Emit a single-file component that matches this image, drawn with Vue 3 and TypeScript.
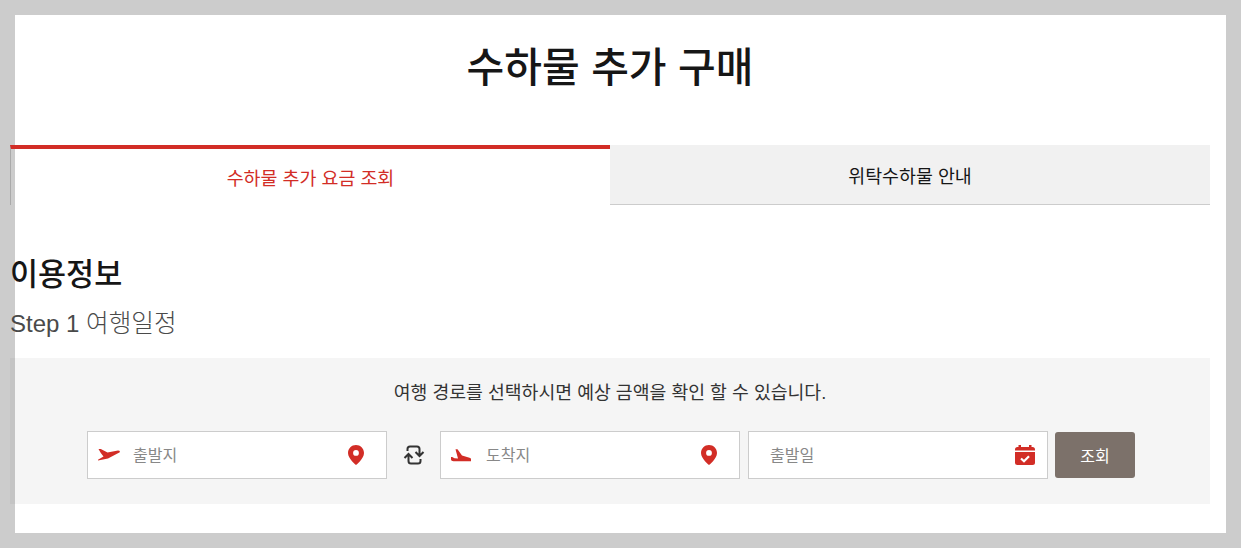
<template>
  <div class="page">
    <h1 class="title">수하물 추가 구매</h1>
    <div class="content">
      <div class="tabs">
        <button class="tab active">수하물 추가 요금 조회</button>
        <button class="tab">위탁수하물 안내</button>
      </div>
      <h2 class="section">이용정보</h2>
      <h3 class="step">Step 1 <span class="step-name">여행일정</span></h3>
      <div class="panel">
        <p class="notice">여행 경로를 선택하시면 예상 금액을 확인 할 수 있습니다.</p>
        <div class="search">
          <div class="field">
            <svg class="plane" width="24" height="14" viewBox="0 0 24 14">
              <path d="M1.500 1H3.800L10.500 4.500 21 2.500Q22.800 2.500 22.800 3.300V4.300L11 10.500 1 12.500V11.800L6.500 8.500 3.800 5Z" fill="#d22d26" />
            </svg>
            <span class="placeholder">출발지</span>
            <svg class="pin" width="24" height="24" viewBox="0 0 24 24">
              <path d="M12 2C7.6 2 4 5.5 4 9.900 4 15.500 12 22 12 22s8-6.500 8-12.100C20 5.500 16.400 2 12 2zm0 10.800a2.900 2.900 0 1 1 0-5.800 2.900 2.900 0 0 1 0 5.800z" fill="#d22d26" />
            </svg>
          </div>
          <button class="swap" aria-label="swap">
            <svg width="22" height="22" viewBox="0 0 22 22" fill="none" stroke="#333" stroke-width="2">
              <path d="M4.500 7V5Q4.500 2.500 7 2.500H14Q16.500 2.500 16.500 5V11.500M12.500 8L16.500 12 20.500 8" />
              <path d="M17.500 15V17Q17.500 19.500 15 19.500H8Q5.500 19.500 5.500 17V10.500M1.500 14L5.500 10 9.500 14" />
            </svg>
          </button>
          <div class="field">
            <svg class="plane" width="24" height="14" viewBox="0 0 24 14">
              <path d="M5.500 1.200H7.500L12 7.500 19.500 9.800Q21 10.300 21 11V13.200H3.500Q1 13 1 11.500V9H2.200L4.500 10.300 8 10.500Z" fill="#d22d26" />
            </svg>
            <span class="placeholder">도착지</span>
            <svg class="pin" width="24" height="24" viewBox="0 0 24 24">
              <path d="M12 2C7.6 2 4 5.5 4 9.900 4 15.500 12 22 12 22s8-6.500 8-12.100C20 5.500 16.400 2 12 2zm0 10.800a2.900 2.900 0 1 1 0-5.800 2.900 2.900 0 0 1 0 5.800z" fill="#d22d26" />
            </svg>
          </div>
          <div class="field date">
            <span class="placeholder">출발일</span>
            <svg class="cal" width="22" height="22" viewBox="0 0 22 22">
              <path d="M4.500 1h2.500v2h8V1h2.500v2h1Q21 3 21 5.500V6.500H1V5.500Q1 3 3.500 3h1z" fill="#d22d26" />
              <path d="M1 8h20v10.500Q21 21 18.500 21h-15Q1 21 1 18.500z" fill="#d22d26" />
              <path d="M7 14.500l3 2.800 5-5" fill="none" stroke="#fff" stroke-width="2.200" />
            </svg>
          </div>
          <button class="submit">조회</button>
        </div>
      </div>
    </div>
  </div>
</template>

<script setup lang="ts">
</script>

<style>
html, body {
  background: #cccccc;
}
</style>

<style scoped>
.page {
  box-sizing: border-box;
  width: 1211px;
  height: 518px;
  margin: 15px 0 0 15px;
  background: #fff;
  font-family: "Liberation Sans", "Noto Sans CJK KR", sans-serif;
  color: #161616;
}

.title {
  margin: 0 0 0 -5px;
  padding-top: 24px;
  width: 1200px;
  text-align: center;
  font-size: 41px;
  line-height: 58px;
  font-weight: 500;
}

.content {
  margin-left: -5px;
  width: 1200px;
  padding-top: 48px;
}

.tabs {
  display: flex;
  height: 60px;
}

.tab {
  flex: 0 0 600px;
  box-sizing: border-box;
  padding: 0;
  background: #f1f1f1;
  border: none;
  border-bottom: 1px solid #ccc;
  font: inherit;
  font-size: 18.4px;
  color: #161616;
}

.tab.active {
  background: transparent;
  border-top: 4px solid #d22d26;
  border-left: 1px solid #aaa;
  border-bottom: none;
  color: #d22d26;
}

.section {
  margin: 0;
  padding-top: 50px;
  font-size: 30.5px;
  line-height: 38px;
  font-weight: 500;
}

.step {
  margin: 0;
  padding-top: 14px;
  font-size: 24px;
  line-height: 34px;
  font-weight: 400;
  color: #4a4a4a;
}

.step-name {
  font-size: 24.6px;
  font-weight: 300;
}

.panel {
  margin-top: 17px;
  height: 146px;
  box-sizing: border-box;
  padding-top: 23px;
  background: rgba(0, 0, 0, 0.04);
}

.notice {
  margin: 0;
  text-align: center;
  font-size: 18.3px;
  line-height: 24px;
  color: #333;
}

.search {
  display: flex;
  align-items: center;
  margin: 26px 0 0 77px;
}

.field {
  box-sizing: border-box;
  display: flex;
  align-items: center;
  width: 300px;
  height: 48px;
  padding: 0 18px 0 9px;
  background: #fff;
  border: 1px solid #ccc;
}

.field + .field {
  margin-left: 8px;
}

.placeholder {
  flex: 1;
  margin-left: 12px;
  padding-bottom: 2px;
  font-size: 16px;
  color: #888;
}

.date {
  padding: 0 11px 0 9px;
}

.swap {
  display: flex;
  align-items: center;
  justify-content: center;
  width: 53px;
  height: 48px;
  padding: 0;
  background: none;
  border: none;
}

.submit {
  width: 80px;
  height: 46px;
  margin-left: 7px;
  padding: 0;
  background: #7c716a;
  border: none;
  border-radius: 3px;
  color: #fff;
  font: inherit;
  font-size: 16px;
}
</style>
